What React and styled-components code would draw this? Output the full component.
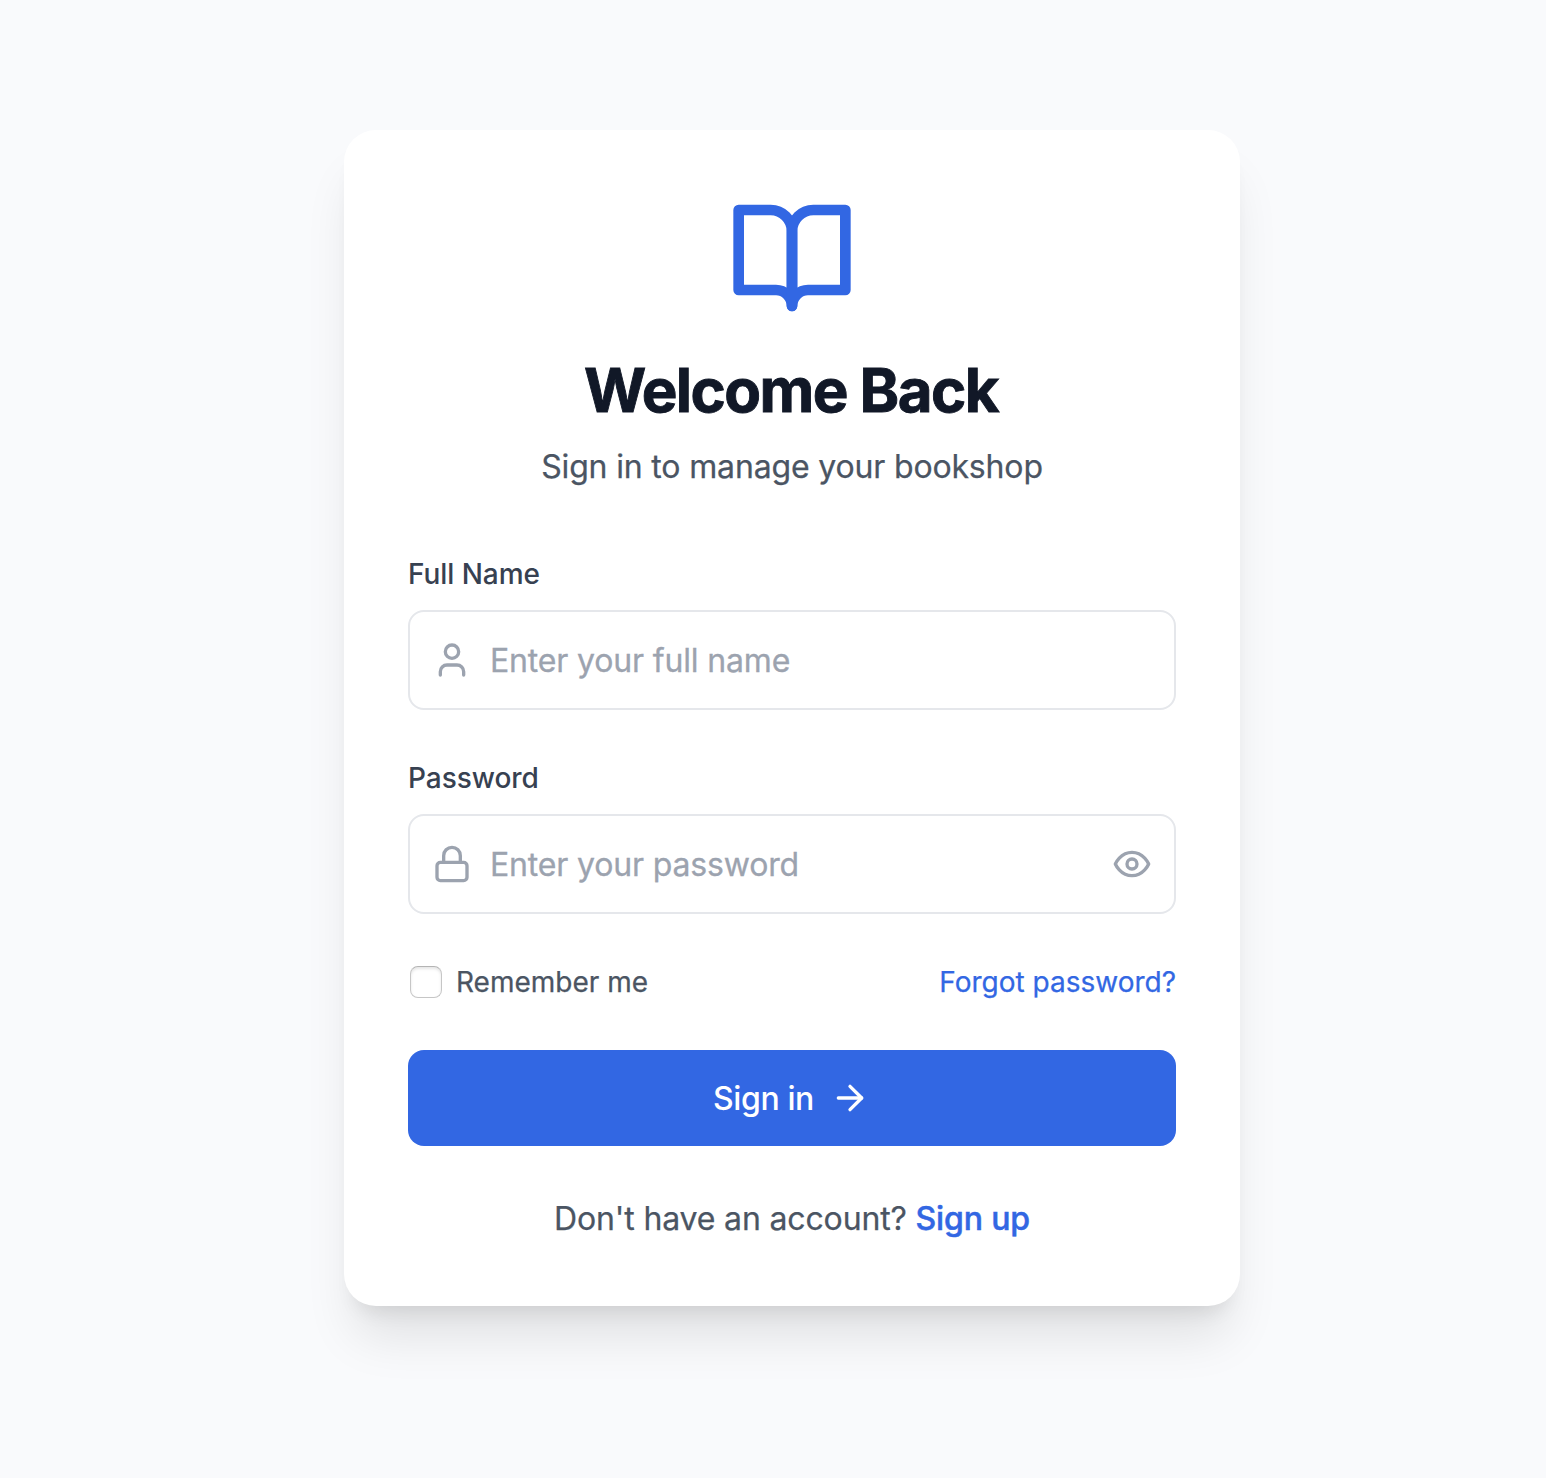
import React from "react";
import styled, { createGlobalStyle } from "styled-components";
import { User, Lock } from "lucide-react";

const GlobalStyle = createGlobalStyle`
  *, *::before, *::after { box-sizing: border-box; }
  body { margin: 0; background: #f9fafc; font-family: Inter, "Liberation Sans", sans-serif; }
`;

const Page = styled.main`
  min-height: 1478px;
  display: flex;
  justify-content: center;
  align-items: flex-start;
  padding: 130px 0 0 38px;
  background: #f9fafc;
`;

const Card = styled.section`
  width: 896px;
  height: 1176px;
  padding: 64px;
  border-radius: 32px;
  background: #fff;
  box-shadow: 0 40px 50px -10px rgba(0, 0, 0, 0.1), 0 16px 20px -12px rgba(0, 0, 0, 0.1);
`;

const Header = styled.header`
  display: flex;
  flex-direction: column;
  align-items: center;
  margin-bottom: 63px;
`;

const Icon = styled.svg`
  flex: none;
  display: block;
  width: ${(p) => p.$size}px;
  height: ${(p) => p.$size}px;
  fill: none;
  stroke: currentColor;
  stroke-width: 2;
  stroke-linecap: round;
  stroke-linejoin: round;
`;

const Logo = styled(Icon)`
  color: #3267e3;
  margin-bottom: 32px;
`;

const Title = styled.h1`
  margin: 0;
  padding-right: 2px;
  font-size: 60px;
  line-height: 72px;
  font-weight: 700;
  letter-spacing: -1.55px;
  -webkit-text-stroke: 0.9px #111827;
  color: #111827;
`;

const Subtitle = styled.p`
  margin: 17px 0 0;
  font-size: 32px;
  line-height: 48px;
  letter-spacing: -0.16px;
  -webkit-text-stroke: 0.25px currentColor;
  color: #4b5563;
`;

const Form = styled.form`
  display: flex;
  flex-direction: column;
`;

const Field = styled.div`
  display: flex;
  flex-direction: column;
  gap: 16px;
  margin-bottom: 48px;
`;

const Label = styled.label`
  font-size: 28px;
  line-height: 40px;
  font-weight: 500;
  letter-spacing: -0.05px;
  color: #374151;
`;

const InputBox = styled.div`
  display: flex;
  align-items: center;
  gap: 18px;
  height: 100px;
  padding: 0 22px;
  border: 2px solid #e5e7eb;
  border-radius: 16px;
  color: #9ca3af;
`;

const Input = styled.input`
  flex: 1;
  min-width: 0;
  padding: 2px 0 0;
  border: 0;
  outline: 0;
  background: transparent;
  font: 400 32px/48px Inter, "Liberation Sans", sans-serif;
  letter-spacing: -0.16px;
  color: #111827;
  &::placeholder {
    color: #9ca3af;
    opacity: 1;
    -webkit-text-stroke: 0.3px #9ca3af;
  }
`;

const Options = styled.div`
  display: flex;
  justify-content: space-between;
  align-items: center;
  height: 40px;
  font-size: 28px;
  line-height: 40px;
  -webkit-text-stroke: 0.25px currentColor;
`;

const Remember = styled.label`
  display: flex;
  align-items: center;
  gap: 14px;
  padding-left: 2px;
  color: #4b5563;
  -webkit-text-stroke-color: #4b5563;
`;

const Checkbox = styled.input`
  appearance: none;
  width: 32px;
  height: 32px;
  margin: 0;
  border: 1px solid #c6c6c6;
  border-top-color: #b4b4b4;
  border-radius: 8px;
  background: #fff;
  box-shadow: inset 0 2px 3px rgba(0, 0, 0, 0.1);
`;

const Link = styled.a`
  color: #3267e3;
  -webkit-text-stroke: 0.25px #3267e3;
  text-decoration: none;
  font-weight: ${(p) => (p.$strong ? 500 : 400)};
`;

const SignUpLink = styled(Link)`
  -webkit-text-stroke: 0.5px #3267e3;
`;

const Submit = styled.button`
  display: flex;
  justify-content: center;
  align-items: center;
  gap: 16px;
  height: 96px;
  margin-top: 48px;
  padding: 0 6px 0 5px;
  border: 0;
  border-radius: 16px;
  background: #3267e3;
  color: #fff;
  font: 500 32px/48px Inter, "Liberation Sans", sans-serif;
  letter-spacing: -0.4px;
`;

const SubmitText = styled.span`
  padding-top: 2px;
`;

const Footer = styled.p`
  margin: 49px 0 0;
  text-align: center;
  font-size: 32px;
  line-height: 48px;
  letter-spacing: -0.15px;
  -webkit-text-stroke: 0.25px #4b5563;
  color: #4b5563;
`;

export default function App() {
  return (
    <>
      <GlobalStyle />
      <Page>
        <Card>
          <Header>
            <Logo $size={128} viewBox="0 0 24 24" aria-hidden="true">
              <path d="M2 3h6a4 4 0 0 1 4 4v14a3 3 0 0 0-3-3H2z" />
              <path d="M22 3h-6a4 4 0 0 0-4 4v14a3 3 0 0 1 3-3h7z" />
            </Logo>
            <Title>Welcome Back</Title>
            <Subtitle>Sign in to manage your bookshop</Subtitle>
          </Header>
          <Form>
            <Field>
              <Label htmlFor="name">Full Name</Label>
              <InputBox>
                <User size={40} />
                <Input id="name" placeholder="Enter your full name" />
              </InputBox>
            </Field>
            <Field>
              <Label htmlFor="password">Password</Label>
              <InputBox>
                <Lock size={40} />
                <Input id="password" type="password" placeholder="Enter your password" />
                <Icon $size={40} viewBox="0 0 24 24" aria-hidden="true">
                  <path d="M2 12s3-7 10-7 10 7 10 7-3 7-10 7-10-7-10-7Z" />
                  <circle cx="12" cy="12" r="3" />
                </Icon>
              </InputBox>
            </Field>
            <Options>
              <Remember>
                <Checkbox type="checkbox" />
                Remember me
              </Remember>
              <Link href="#">Forgot password?</Link>
            </Options>
            <Submit type="button">
              <SubmitText>Sign in</SubmitText>
              <Icon $size={40} viewBox="0 0 24 24" aria-hidden="true">
                <path d="M5 12h14" />
                <path d="m12 5 7 7-7 7" />
              </Icon>
            </Submit>
          </Form>
          <Footer>
            Don't have an account? <SignUpLink href="#" $strong>Sign up</SignUpLink>
          </Footer>
        </Card>
      </Page>
    </>
  );
}
